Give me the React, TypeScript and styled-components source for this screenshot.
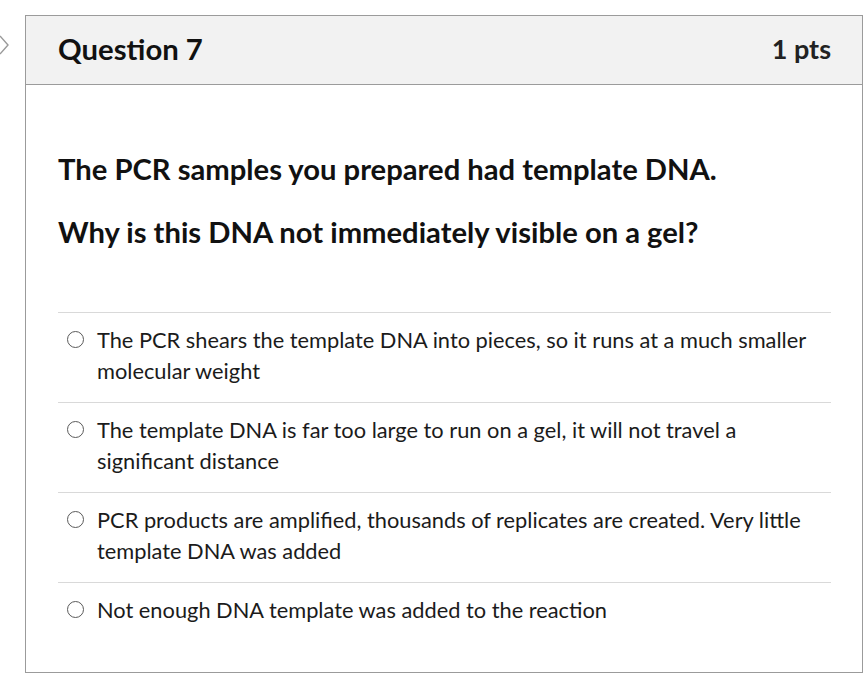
import React from 'react';
import styled, { createGlobalStyle } from 'styled-components';

const GlobalStyle = createGlobalStyle`
  html, body {
    margin: 0;
    padding: 0;
    background: #ffffff;
  }
  body {
    font-family: Lato, "Noto Sans", sans-serif;
    color: #2d3b45;
  }
`;

const Page = styled.div`
  width: 867px;
  height: 683px;
  position: relative;
  box-sizing: border-box;
  padding: 15px 4px 0 25px;
  background: #fff;
  overflow: hidden;
`;

const Chevron = styled.svg`
  position: absolute;
  left: -2px;
  top: 35px;
`;

const Card = styled.div`
  border: 1px solid #9b9b9b;
  height: 658px;
  box-sizing: border-box;
  display: flex;
  flex-direction: column;
`;

const Header = styled.div`
  height: 71px;
  background: #f2f2f2;
  border-bottom: 1px solid #9b9b9b;
  display: flex;
  align-items: center;
  justify-content: space-between;
  padding: 0 31px 4px 32px;
  box-sizing: border-box;
`;

const Title = styled.h2`
  margin: 0;
  font-size: 29.3px;
  font-weight: 700;
  color: #111;
`;

const Points = styled.span`
  font-size: 27px;
  font-weight: 700;
  color: #222;
`;

const Body = styled.div`
  padding: 66px 31px 0 32px;
`;

const Prompt = styled.p<{ $last?: boolean }>`
  margin: 0 0 ${(p) => (p.$last ? '62px' : '27px')};
  font-size: 29.2px;
  line-height: 36px;
  font-weight: 700;
  color: #111;
`;

const AnswerList = styled.div`
  display: flex;
  flex-direction: column;
`;

const Answer = styled.label`
  display: flex;
  align-items: flex-start;
  gap: 13px;
  border-top: 1px solid #d9d9d9;
  padding: 11px 0 15px 9px;
  min-height: 90px;
  box-sizing: border-box;
  font-size: 21.8px;
  line-height: 31px;
  color: #1b1b1b;
`;

const Radio = styled.span`
  flex: 0 0 auto;
  width: 17px;
  height: 17px;
  margin-top: 7px;
  border: 1.5px solid #5a5a5a;
  border-radius: 50%;
  box-sizing: border-box;
`;

const answers = [
  'The PCR shears the template DNA into pieces, so it runs at a much smaller molecular weight',
  'The template DNA is far too large to run on a gel, it will not travel a significant distance',
  'PCR products are amplified, thousands of replicates are created. Very little template DNA was added',
  'Not enough DNA template was added to the reaction',
];

export default function App() {
  return (
    <>
      <GlobalStyle />
      <Page>
        <Chevron width="12" height="20" viewBox="0 0 12 20">
          <path d="M2 1 L10 10 L2 19" fill="none" stroke="#9a9a9a" strokeWidth="1.4" />
        </Chevron>
        <Card>
          <Header>
            <Title>Question 7</Title>
            <Points>1 pts</Points>
          </Header>
          <Body>
            <Prompt>The PCR samples you prepared had template DNA.</Prompt>
            <Prompt $last>Why is this DNA not immediately visible on a gel?</Prompt>
            <AnswerList>
              {answers.map((a) => (
                <Answer key={a}>
                  <Radio />
                  <span>{a}</span>
                </Answer>
              ))}
            </AnswerList>
          </Body>
        </Card>
      </Page>
    </>
  );
}
